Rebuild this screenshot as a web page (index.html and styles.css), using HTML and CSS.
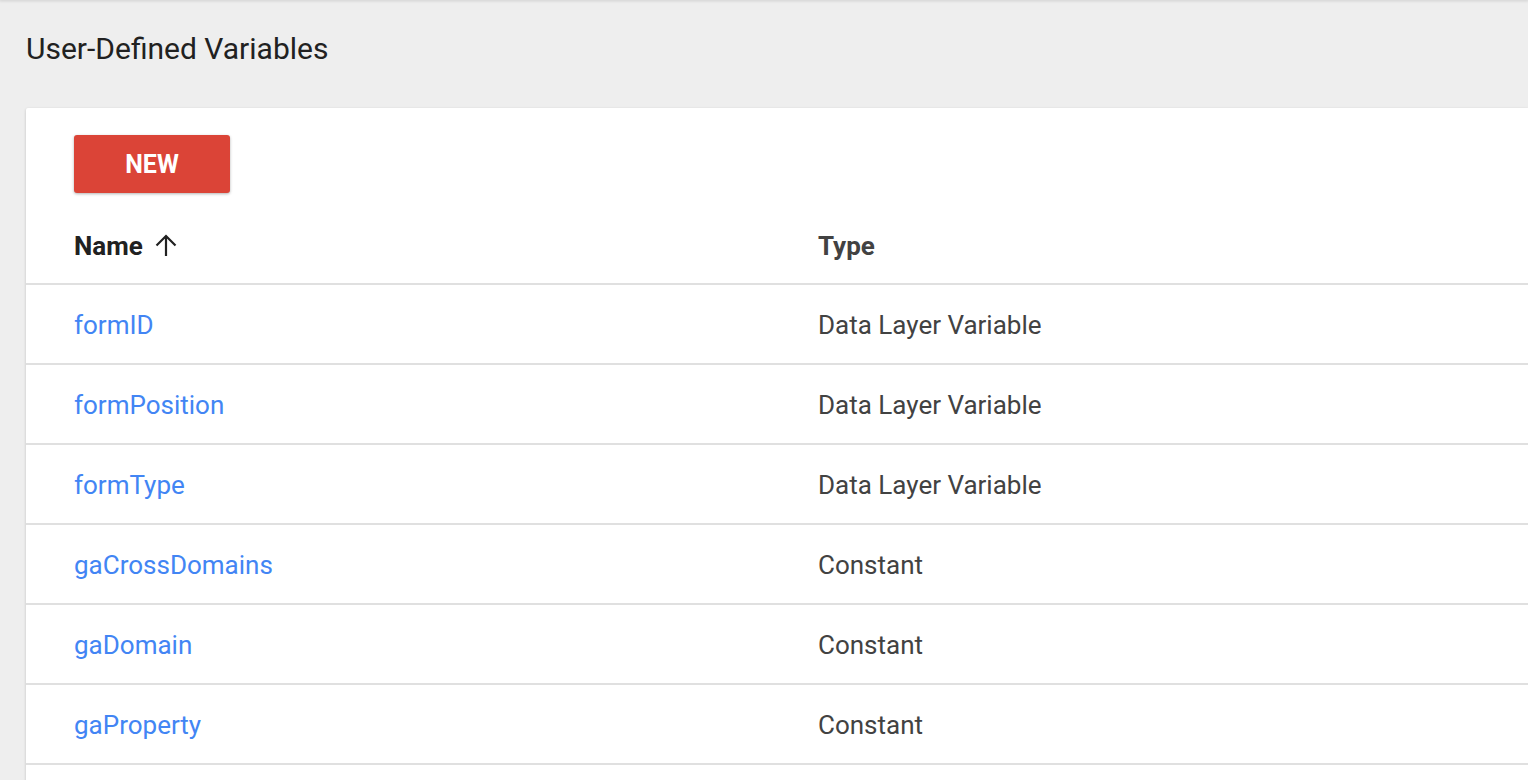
FILE: index.html
```html
<!DOCTYPE html>
<html lang="en">
<head>
    <meta charset="UTF-8">
    <meta name="viewport" content="width=device-width, initial-scale=1.0">
    <title>User-Defined Variables</title>
    <link rel="stylesheet" href="styles.css">
</head>
<body>

    <div class="top-shadow"></div>

    <main class="page">
        <h1 class="page-title">User-Defined Variables</h1>

        <section class="card">
            <div class="card-actions">
                <button class="btn-new">NEW</button>
            </div>

            <div class="table">
                <div class="table-head">
                    <div class="col-name sorted">
                        Name
                        <svg class="sort-icon" width="24" height="24" viewBox="0 0 24 24">
                            <path d="M12 23V3M2.5 12.5L12 3l9.5 9.5" fill="none" stroke="#212121" stroke-width="2.2"/>
                        </svg>
                    </div>
                    <div class="col-type">Type</div>
                </div>

                <div class="table-row">
                    <a class="col-name" href="#">formID</a>
                    <div class="col-type">Data Layer Variable</div>
                </div>
                <div class="table-row">
                    <a class="col-name" href="#">formPosition</a>
                    <div class="col-type">Data Layer Variable</div>
                </div>
                <div class="table-row">
                    <a class="col-name" href="#">formType</a>
                    <div class="col-type">Data Layer Variable</div>
                </div>
                <div class="table-row">
                    <a class="col-name" href="#">gaCrossDomains</a>
                    <div class="col-type">Constant</div>
                </div>
                <div class="table-row">
                    <a class="col-name" href="#">gaDomain</a>
                    <div class="col-type">Constant</div>
                </div>
                <div class="table-row">
                    <a class="col-name" href="#">gaProperty</a>
                    <div class="col-type">Constant</div>
                </div>
            </div>
        </section>
    </main>

</body>
</html>
```

FILE: styles.css
```css
/* General Styles */
body {
    font-family: Roboto, "Liberation Sans", sans-serif;
    margin: 0;
    padding: 0;
    background-color: #eeeeee;
    color: #212121;
    overflow: hidden;
}

/* Shadow from the bar above */
.top-shadow {
    height: 0;
    box-shadow: 0 0 3px 1px rgba(0, 0, 0, 0.15);
}

/* Page */
.page {
    padding-left: 26px;
}

.page-title {
    margin: 0;
    padding-top: 31px;
    font-size: 30px;
    font-weight: 400;
    line-height: 36px;
    color: #212121;
}

/* Card */
.card {
    margin-top: 41px;
    padding-bottom: 40px;
    background: #fff;
    box-shadow: 0 1px 3px rgba(0, 0, 0, 0.2);
    border-radius: 2px 0 0 0;
}

.card-actions {
    padding: 27px 0 0 48px;
}

.btn-new {
    width: 156px;
    height: 58px;
    border: none;
    border-radius: 3px;
    background: #db4437;
    color: #fff;
    font-family: inherit;
    font-size: 25px;
    font-weight: 700;
    box-shadow: 0 1px 3px rgba(0, 0, 0, 0.3);
    cursor: pointer;
}

/* Table */
.table-head,
.table-row {
    display: grid;
    grid-template-columns: 744px 1fr;
    padding-left: 48px;
    border-bottom: 2px solid #e0e0e0;
}

.table-head {
    height: 90px;
    align-items: end;
    font-size: 26px;
    font-weight: 700;
    line-height: 30px;
    color: #424242;
}

.table-head > div {
    padding-bottom: 22px;
}

.table-head .sorted {
    display: flex;
    align-items: center;
    gap: 11px;
    color: #212121;
}

.sort-icon {
    margin-top: -2px;
}

.table-row {
    height: 76px;
    padding-top: 2px;
    align-items: center;
    font-size: 26px;
}

.table-row .col-name {
    color: #4285f4;
    text-decoration: none;
    justify-self: start;
}

.table-row .col-type {
    color: #424242;
}
```
